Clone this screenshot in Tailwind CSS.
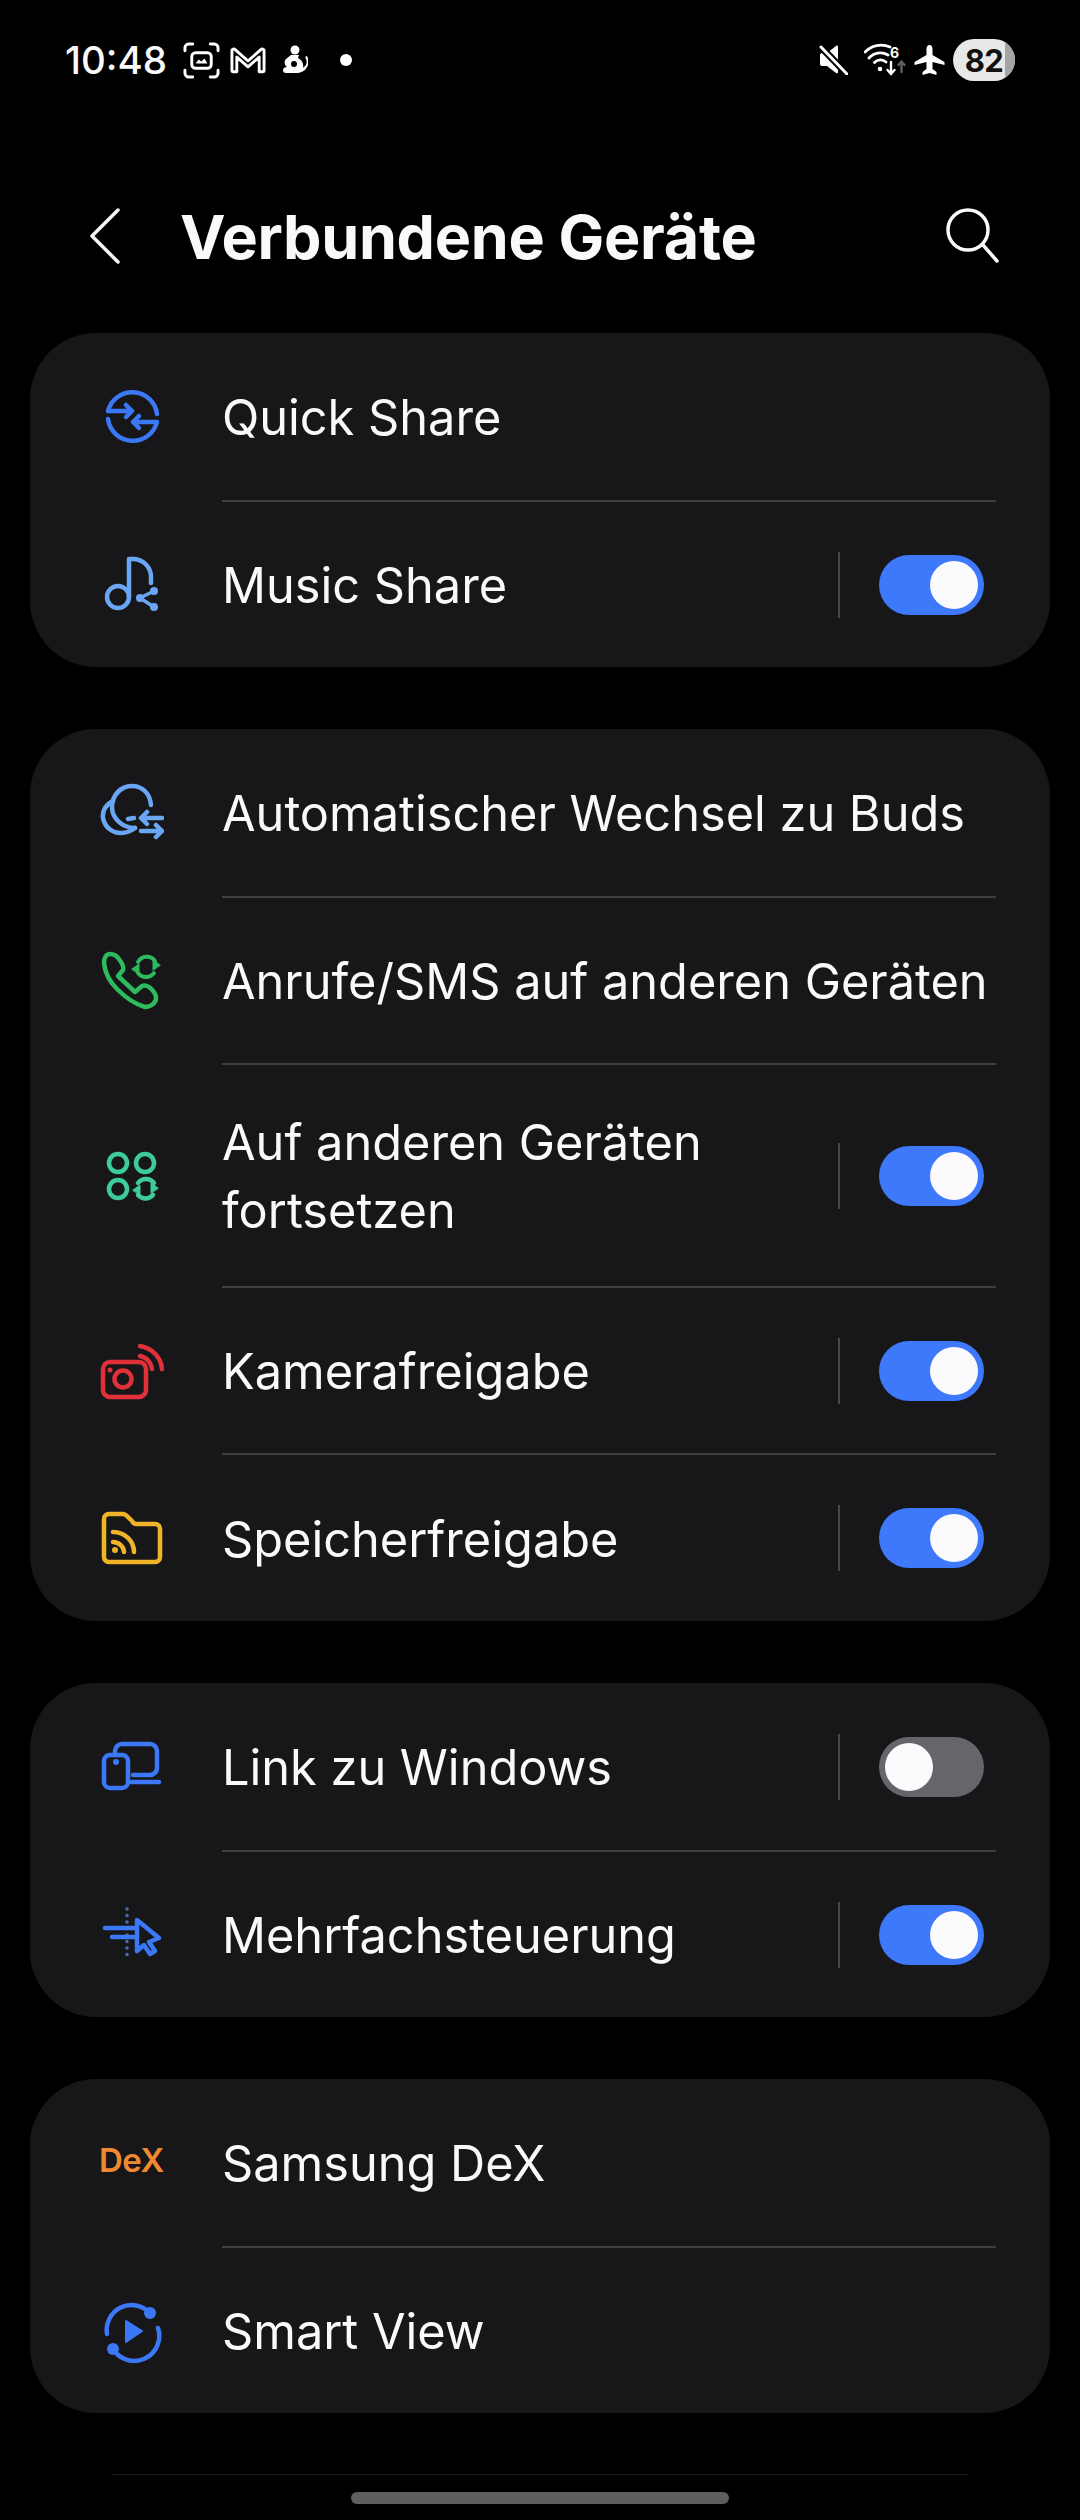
<!DOCTYPE html>
<html lang="de">
<head>
<meta charset="utf-8">
<title>Verbundene Geräte</title>
<script src="https://cdn.jsdelivr.net/npm/@tailwindcss/browser@4"></script>
</head>
<body class="bg-black">
<div class="w-[1080px] h-[2520px] bg-black text-[#f9f9fb] font-['Inter','Liberation_Sans',sans-serif] overflow-hidden flex flex-col">

  <!-- status bar -->
  <div class="h-[120px] flex items-center pl-[65px] pr-[65px]">
    <span class="w-[101px] text-[38.5px] font-medium leading-none whitespace-nowrap">10:48</span>
    <svg class="ml-[17px]" width="37" height="37" viewBox="0 0 38 38" fill="none" stroke="#fff" stroke-width="3" stroke-linecap="round"><path d="M2 9V6a4 4 0 0 1 4-4h4M28 2h4a4 4 0 0 1 4 4v3M36 29v3a4 4 0 0 1-4 4h-4M10 36H6a4 4 0 0 1-4-4v-3"/><rect x="9" y="11" width="20" height="16" rx="4" stroke-width="3"/><path d="M13 22l3-4 3 2 3-3 3 5z" fill="#fff" stroke="none"/></svg>
    <svg class="ml-[10px]" width="36" height="28" viewBox="0 0 37 28" fill="none" stroke="#fff" stroke-width="3" stroke-linejoin="round"><path d="M2 4a2 2 0 0 1 3-1l13.500 12L32 3a2 2 0 0 1 3 1v21a1 1 0 0 1-1 1h-4V11L18.500 21 7 11v15H3a1 1 0 0 1-1-1z"/></svg>
    <svg class="ml-[16px]" width="26" height="30" viewBox="0 0 26 30" fill="#fff"><circle cx="13" cy="5" r="4.500"/><path d="M9 10h8l-1 3c4 2 6 6 5 10l3-3c1-2 1-5-1-8l2-1c2 4 2 8 0 11-2 4-6 6-12 6H4c-2 0-3-1-3-3s2-3 4-3c-3-2-3-6-1-8z"/><circle cx="12" cy="19" r="3" fill="#000"/></svg>
    <span class="ml-[32px] w-[12px] h-[12px] rounded-full bg-white"></span>
    <span class="flex-1"></span>
    <svg width="30" height="30" viewBox="0 0 30 30" fill="#fff" stroke="none"><path d="M2 10c0-1 1-2 2-2h5l9-7c1-1 2 0 2 1v25c0 1-1 2-2 1l-9-7H4c-1 0-2-1-2-2z"/><path d="M2 1l27 28" stroke="#000" stroke-width="7"/><path d="M3 2l26 27" stroke="#fff" stroke-width="3" stroke-linecap="round"/></svg>
    <svg class="ml-[16px]" width="44" height="34" viewBox="0 0 44 34" fill="none" stroke="#fff" stroke-width="2.800" stroke-linecap="round"><path d="M1 9A22 22 0 0 1 26 4M5 15A15 15 0 0 1 24 12M10.500 19.500A8 8 0 0 1 22 19"/><circle cx="16" cy="26" r="2.300" fill="#fff" stroke="none"/><path d="M27 19v12M23.500 27l3.500 4 3.500-4" stroke-width="2.400"/><path d="M37.500 29V19M34.500 22l3-3.500 3 3.500" stroke="#5e5e5e" stroke-width="2.400"/><text x="26" y="15" fill="#fff" stroke="none" font-size="14" font-weight="700" font-family="Inter, sans-serif">6</text></svg>
    <svg class="ml-[6px]" width="31" height="30" viewBox="0 0 31 30" fill="#fff"><path d="M15.500 0c2 0 3 2 3 4v6l12 7v3l-12-3v7l4 3v3l-7-2-7 2v-3l4-3v-7L.5 20v-3l12-7V4c0-2 1-4 3-4z"/></svg>
    <div class="ml-[8px] w-[62px] h-[42px] rounded-[21px] overflow-hidden bg-[#e8e8e8] flex items-center relative">
      <span class="absolute right-0 top-0 bottom-0 w-[10px] bg-[#a4a4a4]"></span>
      <span class="relative w-full text-center text-[31px] font-bold leading-none text-[#111] tracking-[-0.5px]">82</span>
    </div>
  </div>

  <!-- header -->
  <div class="mt-[32px] h-[170px] mb-[11px] flex items-center">
    <svg class="ml-[90px] -mt-[2px]" width="30" height="56" viewBox="0 0 30 56" fill="none" stroke="#f9f9fb" stroke-width="3.500" stroke-linecap="round" stroke-linejoin="round"><path d="M28 2L2 28l26 26"/></svg>
    <h1 class="ml-[60px] text-[61px] font-bold leading-none tracking-[-0.3px] whitespace-nowrap">Verbundene Geräte</h1>
    <span class="flex-1"></span>
    <svg class="mr-[79px] -mt-[4px]" width="56" height="56" viewBox="0 0 56 56" fill="none" stroke="#f9f9fb" stroke-width="3.500" stroke-linecap="round"><circle cx="23" cy="23" r="20"/><path d="M38 38l14 16"/></svg>
  </div>

  <!-- card 1 -->
  <section class="mx-[30px] rounded-[66px] bg-[#17171a] h-[334px]">
    <div class="h-[167px] flex items-center text-[48.7px] leading-[68px]">
      <svg class="ml-[70px] shrink-0" width="64" height="64" viewBox="0 0 64 64" fill="none" stroke="#3a78f5" stroke-width="4.500" stroke-linecap="round" stroke-linejoin="round"><path d="M8 26A25 25 0 0 1 57 29"/><path d="M8 26H32M26 20l6 6-6 6"/><path d="M8 34A25 25 0 0 0 57 37H33M39 31l-6 6 6 6"/></svg>
      <span class="ml-[58px] pt-[3px]">Quick Share</span>
    </div>
    <div class="h-[2px] ml-[192px] mr-[54px] bg-[#3f3f41]"></div>
    <div class="h-[165px] flex items-center text-[48.7px] leading-[68px]">
      <svg class="ml-[70px] shrink-0" width="64" height="64" viewBox="0 0 64 64" fill="none" stroke="#6aa6f4" stroke-width="4.500" stroke-linecap="round" stroke-linejoin="round"><circle cx="18" cy="44" r="11"/><path d="M29 44V6h4A18 18 0 0 1 51 24v6"/><path d="M54 38L40 45l14 9" stroke-width="3.500"/><circle cx="54" cy="38" r="4" fill="#6aa6f4" stroke="none"/><circle cx="40" cy="45" r="4" fill="#6aa6f4" stroke="none"/><circle cx="54" cy="54" r="4" fill="#6aa6f4" stroke="none"/></svg>
      <span class="ml-[58px] pt-[3px] flex-1">Music Share</span>
      <span class="w-[2px] h-[66px] bg-[#48484b]"></span>
      <div class="ml-[39px] mr-[66px] w-[105px] h-[60px] rounded-full bg-[#3e78fb] flex items-center justify-end px-[6px]"><span class="w-[48px] h-[48px] rounded-full bg-[#fbfbfd]"></span></div>
    </div>
  </section>

  <!-- card 2 -->
  <section class="mt-[62px] mx-[30px] rounded-[66px] bg-[#17171a] h-[892px]">
    <div class="h-[167px] flex items-center text-[48.7px] leading-[68px]">
      <svg class="ml-[70px] shrink-0" width="64" height="64" viewBox="0 0 64 64" fill="none" stroke="#6aa6f4" stroke-width="4.500" stroke-linecap="round" stroke-linejoin="round"><path d="M51 24C50 12 42 5 32 5 20 5 12 15 12 26c0 11 10 21 23 21"/><path d="M13 20C6 23 2 30 3 37c2 10 10 15 18 15 5 0 10-2 14-5"/><path d="M62 37H41M47 31l-6 6 6 6"/><path d="M28 38l6-1"/><path d="M41 50H62M56 44l6 6-6 6"/></svg>
      <span class="ml-[58px] pt-[3px]">Automatischer Wechsel zu Buds</span>
    </div>
    <div class="h-[2px] ml-[192px] mr-[54px] bg-[#3f3f41]"></div>
    <div class="h-[165px] flex items-center text-[48.7px] leading-[68px]">
      <svg class="ml-[70px] shrink-0" width="64" height="64" viewBox="0 0 64 64" fill="none" stroke="#2dbb5d" stroke-width="4.500" stroke-linecap="round" stroke-linejoin="round"><path d="M10 5C6 5 4 9 4 14c1 10 6 19 13 26 7 7 17 15 28 18 6 0 11-4 11-9 0-5-3-8-7-11-3-2-5-2-7-1l-7 6-17-16 5-6c1-3-1-7-4-11-2-3-6-5-9-5z"/><path d="M38 13A10 10 0 0 1 55 12M54 24A10 10 0 0 1 38 24" stroke-width="3.800"/><path d="M32 20l7-5v10zM60 16l-7-5v10z" fill="#2dbb5d" stroke-width="1"/></svg>
      <span class="ml-[58px] pt-[3px] whitespace-nowrap">Anrufe/SMS auf anderen Geräten</span>
    </div>
    <div class="h-[2px] ml-[192px] mr-[54px] bg-[#3f3f41]"></div>
    <div class="h-[221px] flex items-center text-[48.7px] leading-[68px]">
      <svg class="ml-[70px] shrink-0" width="64" height="64" viewBox="0 0 64 64" fill="none" stroke="#3ecb9b" stroke-width="4.500" stroke-linecap="round" stroke-linejoin="round"><circle cx="18" cy="19" r="9"/><circle cx="45" cy="19" r="9"/><circle cx="18" cy="45" r="9"/><path d="M38 39A10 10 0 0 1 54 39M53 51A10 10 0 0 1 38 51"/><path d="M33 46l7-5v10zM58 44l-7-5v10z" fill="#3ecb9b" stroke-width="1"/></svg>
      <span class="ml-[58px] pt-[3px] flex-1">Auf anderen Geräten<br>fortsetzen</span>
      <span class="w-[2px] h-[66px] bg-[#48484b]"></span>
      <div class="ml-[39px] mr-[66px] w-[105px] h-[60px] rounded-full bg-[#3e78fb] flex items-center justify-end px-[6px]"><span class="w-[48px] h-[48px] rounded-full bg-[#fbfbfd]"></span></div>
    </div>
    <div class="h-[2px] ml-[192px] mr-[54px] bg-[#3f3f41]"></div>
    <div class="h-[165px] flex items-center text-[48.7px] leading-[68px]">
      <svg class="ml-[70px] shrink-0" width="64" height="64" viewBox="0 0 64 64" fill="none" stroke="#e0303a" stroke-width="4.500" stroke-linecap="round" stroke-linejoin="round"><rect x="3" y="23" width="43" height="35" rx="7"/><circle cx="23" cy="40" r="8.500"/><circle cx="10" cy="31" r="2.500" fill="#e0303a" stroke="none"/><path d="M40 7c12 2 21 11 22 23M40 17c6 1 11 6 12 13"/></svg>
      <span class="ml-[58px] pt-[3px] flex-1">Kamerafreigabe</span>
      <span class="w-[2px] h-[66px] bg-[#48484b]"></span>
      <div class="ml-[39px] mr-[66px] w-[105px] h-[60px] rounded-full bg-[#3e78fb] flex items-center justify-end px-[6px]"><span class="w-[48px] h-[48px] rounded-full bg-[#fbfbfd]"></span></div>
    </div>
    <div class="h-[2px] ml-[192px] mr-[54px] bg-[#3f3f41]"></div>
    <div class="h-[166px] flex items-center text-[48.7px] leading-[68px]">
      <svg class="ml-[70px] shrink-0" width="64" height="64" viewBox="0 0 64 64" fill="none" stroke="#f0b429" stroke-width="4.500" stroke-linecap="round" stroke-linejoin="round"><path d="M4 13a5 5 0 0 1 5-5h14c2 0 3 1 5 3l4 4c1 2 2 3 4 3h19a5 5 0 0 1 5 5v28a5 5 0 0 1-5 5H9a5 5 0 0 1-5-5z"/><circle cx="15" cy="44" r="3" fill="#f0b429" stroke="none"/><path d="M13 36c6 0 11 5 11 10M13 26c12 0 21 9 21 20"/></svg>
      <span class="ml-[58px] pt-[3px] flex-1">Speicherfreigabe</span>
      <span class="w-[2px] h-[66px] bg-[#48484b]"></span>
      <div class="ml-[39px] mr-[66px] w-[105px] h-[60px] rounded-full bg-[#3e78fb] flex items-center justify-end px-[6px]"><span class="w-[48px] h-[48px] rounded-full bg-[#fbfbfd]"></span></div>
    </div>
  </section>

  <!-- card 3 -->
  <section class="mt-[62px] mx-[30px] rounded-[66px] bg-[#17171a] h-[334px]">
    <div class="h-[167px] flex items-center text-[48.7px] leading-[68px]">
      <svg class="ml-[70px] shrink-0" width="64" height="64" viewBox="0 0 64 64" fill="none" stroke="#3a78f5" stroke-width="4.500" stroke-linecap="round" stroke-linejoin="round"><path d="M15 18v-2a7 7 0 0 1 7-7h28a7 7 0 0 1 7 7v17a7 7 0 0 1-7 7H33"/><path d="M31 47h28"/><rect x="4" y="20" width="24" height="33" rx="6"/><circle cx="16" cy="27" r="3" fill="#3a78f5" stroke="none"/></svg>
      <span class="ml-[58px] pt-[3px] flex-1">Link zu Windows</span>
      <span class="w-[2px] h-[66px] bg-[#48484b]"></span>
      <div class="ml-[39px] mr-[66px] w-[105px] h-[60px] rounded-full bg-[#66666a] flex items-center justify-start px-[6px]"><span class="w-[48px] h-[48px] rounded-full bg-[#fbfbfd]"></span></div>
    </div>
    <div class="h-[2px] ml-[192px] mr-[54px] bg-[#3f3f41]"></div>
    <div class="h-[165px] flex items-center text-[48.7px] leading-[68px]">
      <svg class="ml-[70px] shrink-0" width="64" height="64" viewBox="0 0 64 64" fill="none" stroke="#3a78f5" stroke-width="4.500" stroke-linecap="round" stroke-linejoin="round"><path d="M27 6v52" stroke="#4a6fb0" stroke-width="3.500" stroke-dasharray="0.100 6.400"/><path d="M5 25h31M12 34h23"/><path d="M37 17l22 18-10 4 6 9-5 3-6-9-7 6z" fill="#17171a"/></svg>
      <span class="ml-[58px] pt-[3px] flex-1">Mehrfachsteuerung</span>
      <span class="w-[2px] h-[66px] bg-[#48484b]"></span>
      <div class="ml-[39px] mr-[66px] w-[105px] h-[60px] rounded-full bg-[#3e78fb] flex items-center justify-end px-[6px]"><span class="w-[48px] h-[48px] rounded-full bg-[#fbfbfd]"></span></div>
    </div>
  </section>

  <!-- card 4 -->
  <section class="mt-[62px] mx-[30px] rounded-[66px] bg-[#17171a] h-[334px]">
    <div class="h-[167px] flex items-center text-[48.7px] leading-[68px]">
      <span class="ml-[69px] w-[65px] shrink-0 text-[33px] font-semibold leading-none text-[#f08a30] whitespace-nowrap tracking-[-0.5px] -mt-[4px]">DeX</span>
      <span class="ml-[58px] pt-[3px]">Samsung DeX</span>
    </div>
    <div class="h-[2px] ml-[192px] mr-[54px] bg-[#3f3f41]"></div>
    <div class="h-[165px] flex items-center text-[48.7px] leading-[68px]">
      <svg class="ml-[70px] shrink-0" width="64" height="64" viewBox="0 0 64 64" fill="none" stroke="#3a78f5" stroke-width="4.500" stroke-linecap="round" stroke-linejoin="round"><path d="M7 35A25 25 0 0 1 50 14M58 29A25 25 0 0 1 13 50"/><circle cx="50" cy="14" r="6" fill="#3a78f5" stroke="none"/><circle cx="13" cy="50" r="6" fill="#3a78f5" stroke="none"/><path d="M26 22l16 10-16 11z" fill="#3a78f5" stroke-width="2"/></svg>
      <span class="ml-[58px] pt-[3px]">Smart View</span>
    </div>
  </section>

  <!-- bottom -->
  <div class="mt-[61px] mx-[112px] h-[1px] bg-[#1c1c1e]"></div>
  <div class="mt-[17px] mx-auto w-[378px] h-[12px] rounded-full bg-[#5f5f5f]"></div>
</div>
</body>
</html>
